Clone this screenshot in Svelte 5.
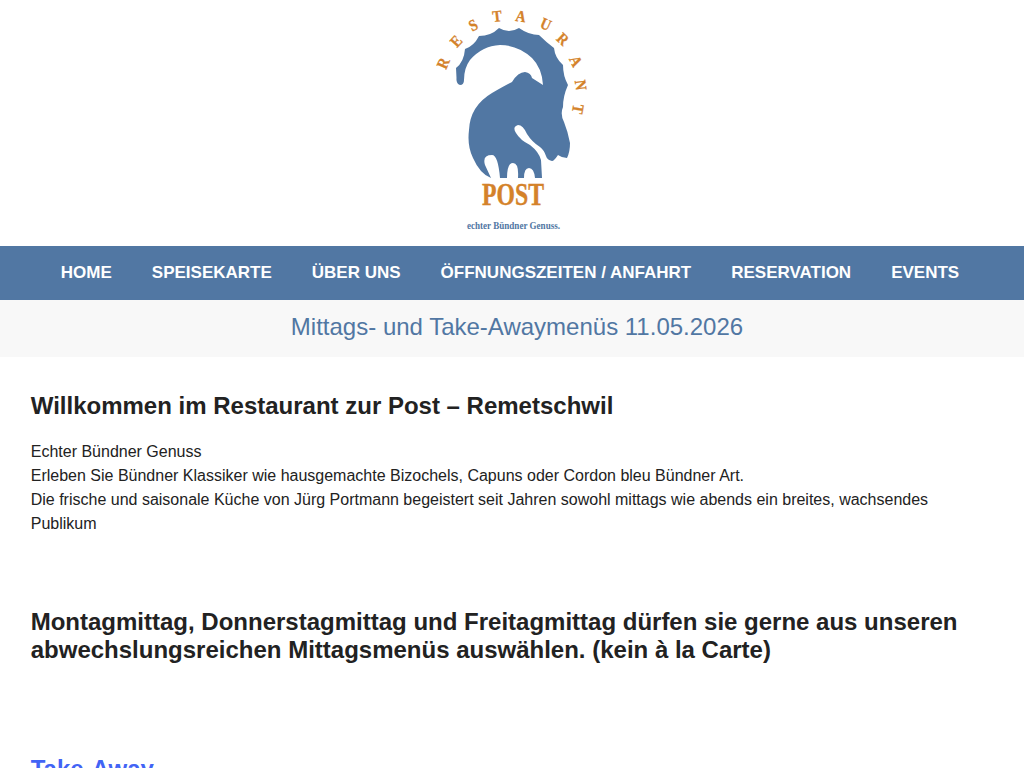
<script lang="ts">
  const navItems = ['HOME', 'SPEISEKARTE', 'ÜBER UNS', 'ÖFFNUNGSZEITEN / ANFAHRT', 'RESERVATION', 'EVENTS'];

  // Buchstaben im Bogen um das Logo: [x, y, Drehung]
  const arcLetters = [
    ['R', 23, 63, -66],
    ['E', 36, 41, -48],
    ['S', 53, 25, -28],
    ['T', 77, 16, -6],
    ['A', 101, 16, 9],
    ['U', 126, 24, 24],
    ['R', 143, 39, 43],
    ['A', 156, 61, 63],
    ['N', 161, 85, 82],
    ['T', 158, 109, 100],
  ] as const;
</script>

<header class="logo-row">
  <svg class="logo" viewBox="0 0 180 240" width="180" height="240" aria-label="Restaurant Post">
    <path
      fill="#5177a3"
      d="M40 85 Q36 84 36.500 78 L36 68 Q44 62 45 49 Q54 46 59 36 Q71 36 79 28 Q89 34 99 28 Q109 35 119 35 Q126 42 134 48 Q135 58 143 65 Q143 76 148 85 Q143 96 143 107 Q140 114 144 122 Q148 132 150 143 Q150 152 147 158 Q142 158 138 155 Q134 161 132 161 Q127 160 126 156 Q124 150 120 147 Q112 142 107 134 Q103 125 98 125 Q92 127 96 133 Q100 140 110 145 Q119 152 121 160 L122 178 L115 178 Q114 168 109 168 Q104 168 104 178 L98 178 Q99 163 93 163 Q87 163 87 178 L80 178 Q78 155 72 155 Q62 155 65 165 L71 178 Q60 174 53 158 Q47 146 49 130 Q50 106 72 93 Q84 86 92 82 Q98 72 105 72 Q111 73 112 78 L123 85 Q122 68 112 58 Q98 45 80 45 Q62 46 50 60 Q44 68 44 80 Q44 85 40 85 Z"
    />
    {#each arcLetters as [letter, x, y, rot]}
      <text class="arc" y="5.500" text-anchor="middle" transform="translate({x} {y}) rotate({rot}) scale(.88 1)">{letter}</text>
    {/each}
    <text class="post" x="93" y="205" text-anchor="middle" textLength="62" lengthAdjust="spacingAndGlyphs">POST</text>
    <text class="claim" x="93.500" y="229" text-anchor="middle" textLength="93" lengthAdjust="spacingAndGlyphs">echter Bündner Genuss.</text>
  </svg>
</header>

<nav class="main-nav">
  {#each navItems as item}
    <a href="#top">{item}</a>
  {/each}
</nav>

<div class="notice">
  <a href="#top">Mittags- und Take-Awaymenüs 11.05.2026</a>
</div>

<main class="content">
  <h2 class="welcome">Willkommen im Restaurant zur Post – Remetschwil</h2>
  <p>
    Echter Bündner Genuss<br />
    Erleben Sie Bündner Klassiker wie hausgemachte Bizochels, Capuns oder Cordon bleu Bündner Art.<br />
    Die frische und saisonale Küche von Jürg Portmann begeistert seit Jahren sowohl mittags wie abends ein breites, wachsendes Publikum
  </p>
  <h2 class="lunch">Montagmittag, Donnerstagmittag und Freitagmittag dürfen sie gerne aus unseren abwechslungsreichen Mittagsmenüs auswählen. (kein à la Carte)</h2>
  <h2 class="takeaway"><a href="#top">Take-Away</a></h2>
</main>

<style>
  :global(body) {
    margin: 0;
    background: #fff;
    font-family: "Liberation Sans", Arial, sans-serif;
    color: #222;
    overflow: hidden;
  }

  .logo-row {
    height: 246px;
    display: flex;
    justify-content: center;
    padding-right: 4px;
  }

  .logo {
    display: block;
  }

  .arc {
    font: bold 16px "Liberation Serif", serif;
    fill: #d4822a;
    stroke: #d4822a;
    stroke-width: 0.3;
  }

  .post {
    font: bold 31px "Liberation Serif", serif;
    fill: #d4822a;
    stroke: #d4822a;
    stroke-width: 0.4;
  }

  .claim {
    font: bold 10.500px "Liberation Serif", serif;
    fill: #5177a3;
  }

  .main-nav {
    height: 54px;
    background: #5177a3;
    display: flex;
    justify-content: center;
    align-items: center;
    gap: 40px;
    padding-right: 4px;
  }

  .main-nav a {
    color: #fff;
    font-size: 17px;
    font-weight: 700;
    text-decoration: none;
  }

  .notice {
    box-sizing: border-box;
    height: 57px;
    background: #f8f8f8;
    display: flex;
    justify-content: center;
    align-items: center;
    padding: 0 0 4px 10px;
  }

  .notice a {
    color: #5177a3;
    font-size: 24px;
    text-decoration: none;
  }

  .content {
    padding: 0 30.720px;
  }

  h2 {
    margin: 0;
    font-weight: 700;
  }

  .welcome {
    font-size: 24px;
    line-height: 28px;
    margin-top: 35px;
  }

  p {
    margin: 20px 0 0;
    font-size: 16px;
    line-height: 24px;
  }

  .lunch {
    font-size: 24px;
    line-height: 28px;
    margin-top: 72px;
  }

  .takeaway {
    font-size: 24px;
    line-height: 28px;
    margin-top: 91px;
  }

  .takeaway a {
    color: #4264f5;
  }
</style>
